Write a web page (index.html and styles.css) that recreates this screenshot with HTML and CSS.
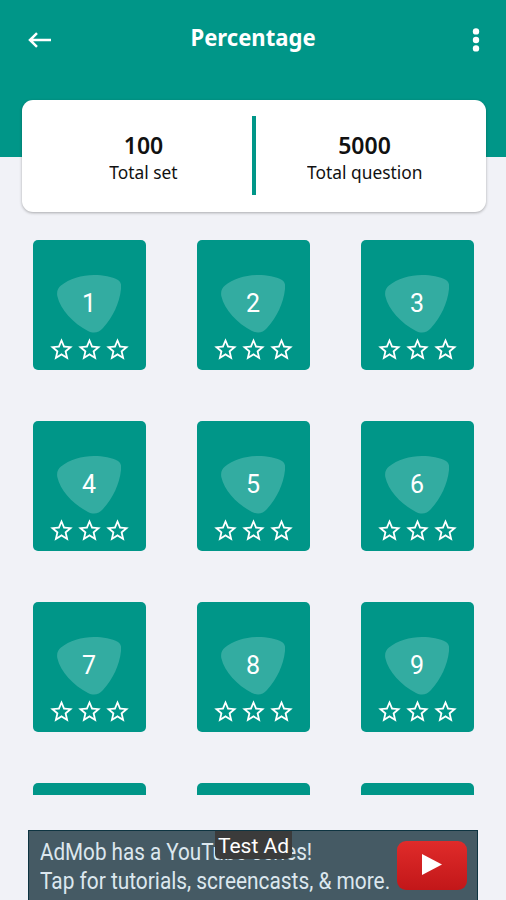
FILE: index.html
```html
<!DOCTYPE html>
<html lang="en">
<head>
	<meta charset="UTF-8">
	<title>Percentage</title>
	<link rel="stylesheet" href="styles.css">
	<script src="sets.js" defer></script>
</head>
<body>
	<header class="app-bar">
		<svg class="back" viewBox="0 0 24 16">
			<path d="M9 1.2 2 8l7 6.8M2.4 8H23"/>
		</svg>
		<h1>Percentage</h1>
		<svg class="more" viewBox="0 0 8 24">
			<circle cx="4" cy="3.4" r="3.2"/>
			<circle cx="4" cy="12" r="3.2"/>
			<circle cx="4" cy="20.4" r="3.2"/>
		</svg>
	</header>
	<section class="totals">
		<div class="total">
			<strong>100</strong>
			<span>Total set</span>
		</div>
		<div class="divider"></div>
		<div class="total">
			<strong>5000</strong>
			<span>Total question</span>
		</div>
	</section>
	<main class="sets"></main>
	<template id="set-template">
		<div class="set">
			<svg class="badge" viewBox="0 0 64 58">
				<path d="M0.3 21C-0.500 16 1 13 4 10.500C12 4 25 0 37 0C46 0 55 1.500 61 5C64 7 64.500 10 64 14C62.500 28 56 42 46 53C41.500 58.500 36 58.500 31 56C16 48 3.500 35 0.300 21Z"/>
			</svg>
			<span class="number"></span>
			<div class="stars">
				<svg viewBox="0 0 24 24"><use href="#star"/></svg>
				<svg viewBox="0 0 24 24"><use href="#star"/></svg>
				<svg viewBox="0 0 24 24"><use href="#star"/></svg>
			</div>
		</div>
	</template>
	<svg class="symbols">
		<symbol id="star" viewBox="0 0 24 24">
			<path d="M22 9.240l-7.190-.62L12 2 9.190 8.630 2 9.240l5.460 4.730L5.820 21 12 17.270 18.180 21l-1.630-7.030L22 9.240zM12 15.400l-3.760 2.270 1-4.280-3.320-2.880 4.380-.38L12 6.100l1.710 4.040 4.380.38-3.320 2.880 1 4.280L12 15.400z"/>
		</symbol>
	</svg>
	<footer class="ad">
		<div class="ad-text">
			<p class="ad-title">AdMob has a YouTube series!</p>
			<p class="ad-body">Tap for tutorials, screencasts, &amp; more.</p>
		</div>
		<div class="play">
			<svg viewBox="0 0 20 21"><path d="M0 0 20 10.500 0 21Z"/></svg>
		</div>
		<span class="test-ad">Test Ad</span>
	</footer>
</body>
</html>
```
FILE: styles.css
```css
* {
	box-sizing: border-box;
}
body {
	margin: 0;
	height: 900px;
	overflow: hidden;
	display: flex;
	flex-direction: column;
	background-color: #f1f2f7;
	font-family: "Noto Sans", "Open Sans", sans-serif;
}
.symbols {
	display: none;
}
.app-bar {
	flex: none;
	height: 157px;
	padding: 0 26px 0 28px;
	display: flex;
	justify-content: space-between;
	align-items: flex-start;
	background-color: #009688;
}
.app-bar h1 {
	margin: 20px 17px 0 0;
	color: white;
	font-size: 24px;
	line-height: 34px;
	font-weight: 700;
	transform: scaleX(0.92);
}
.back {
	width: 24px;
	height: 16px;
	margin-top: 32px;
	fill: none;
	stroke: white;
	stroke-width: 2.5;
}
.more {
	width: 8px;
	height: 24px;
	margin-top: 28px;
	fill: white;
}
.totals {
	flex: none;
	width: 464px;
	height: 112px;
	margin: -57px 0 0 22px;
	display: flex;
	align-items: center;
	background-color: white;
	border-radius: 11px;
	box-shadow: 0 1px 3px rgba(0,0,0,0.3);
}
.total {
	flex: 1 0 0;
	display: flex;
	flex-direction: column;
	align-items: center;
	padding-top: 6px;
	color: #111;
	font-size: 18px;
	line-height: 27px;
}
.total:first-child {
	padding-left: 13px;
}
.total:last-child {
	padding-right: 13px;
}
.total strong {
	font-size: 23px;
	font-weight: 600;
}
.total span {
	transform: scaleX(0.965);
	white-space: nowrap;
}
.divider {
	width: 4px;
	height: 79px;
	margin-bottom: 1px;
	background-color: #009688;
}
.sets {
	flex: none;
	height: 555px;
	margin: 28px 0 0 33px;
	overflow: hidden;
	display: grid;
	grid-template-columns: repeat(3, 113px);
	grid-auto-rows: 130px;
	gap: 51px;
}
.set {
	display: grid;
	grid-template-rows: 92px 38px;
	justify-items: center;
	background-color: #009688;
	border-radius: 5px;
}
.badge {
	grid-area: 1 / 1;
	width: 64px;
	height: 58px;
	margin: 35px 1px 0 0;
	fill: #33aca1;
}
.number {
	grid-area: 1 / 1;
	margin: 49px 1px 0 0;
	color: white;
	font-family: Roboto, sans-serif;
	font-size: 25px;
	line-height: 30px;
}
.stars {
	display: flex;
	gap: 1px;
	margin: 4px 1px 0 0;
}
.stars svg {
	width: 27px;
	height: 27px;
	fill: white;
}
.ad {
	flex: none;
	position: relative;
	width: 450px;
	height: 70px;
	margin: 35px 0 0 28px;
	padding: 7px 10px 0 11px;
	display: flex;
	justify-content: space-between;
	background-color: #455a64;
	border: 1px solid #0e3441;
	border-bottom: 0;
	font-family: Roboto, sans-serif;
}
.ad-text {
	width: 350px;
	color: #dce7ee;
	font-size: 24px;
	line-height: 29px;
	white-space: nowrap;
}
.ad-text p {
	margin: 0;
	width: max-content;
	transform-origin: left;
}
.ad-title {
	transform: scaleX(0.860);
}
.ad-body {
	transform: scaleX(0.869);
}
.play {
	width: 70px;
	height: 49px;
	margin-top: 3px;
	display: flex;
	align-items: center;
	justify-content: center;
	background: linear-gradient(#e02b2a, #c21719);
	border-radius: 9px;
}
.play svg {
	width: 20px;
	height: 21px;
	margin-bottom: 2px;
	fill: white;
}
.test-ad {
	position: absolute;
	top: 0;
	left: 186px;
	width: 77px;
	height: 28px;
	background-color: #3b3b3b;
	border-radius: 0 0 5px 5px;
	color: white;
	font-size: 21px;
	line-height: 30px;
	text-align: center;
	white-space: nowrap;
}
```
FILE: sets.js
```js
const container = document.querySelector(".sets");
const template = document.querySelector("#set-template");

for (let i = 1; i <= 12; i++) {
	const set = template.content.cloneNode(true);
	// only the top edge of the last row is visible
	if (i <= 9) {
		set.querySelector(".number").textContent = i;
	}
	container.appendChild(set);
}
```
